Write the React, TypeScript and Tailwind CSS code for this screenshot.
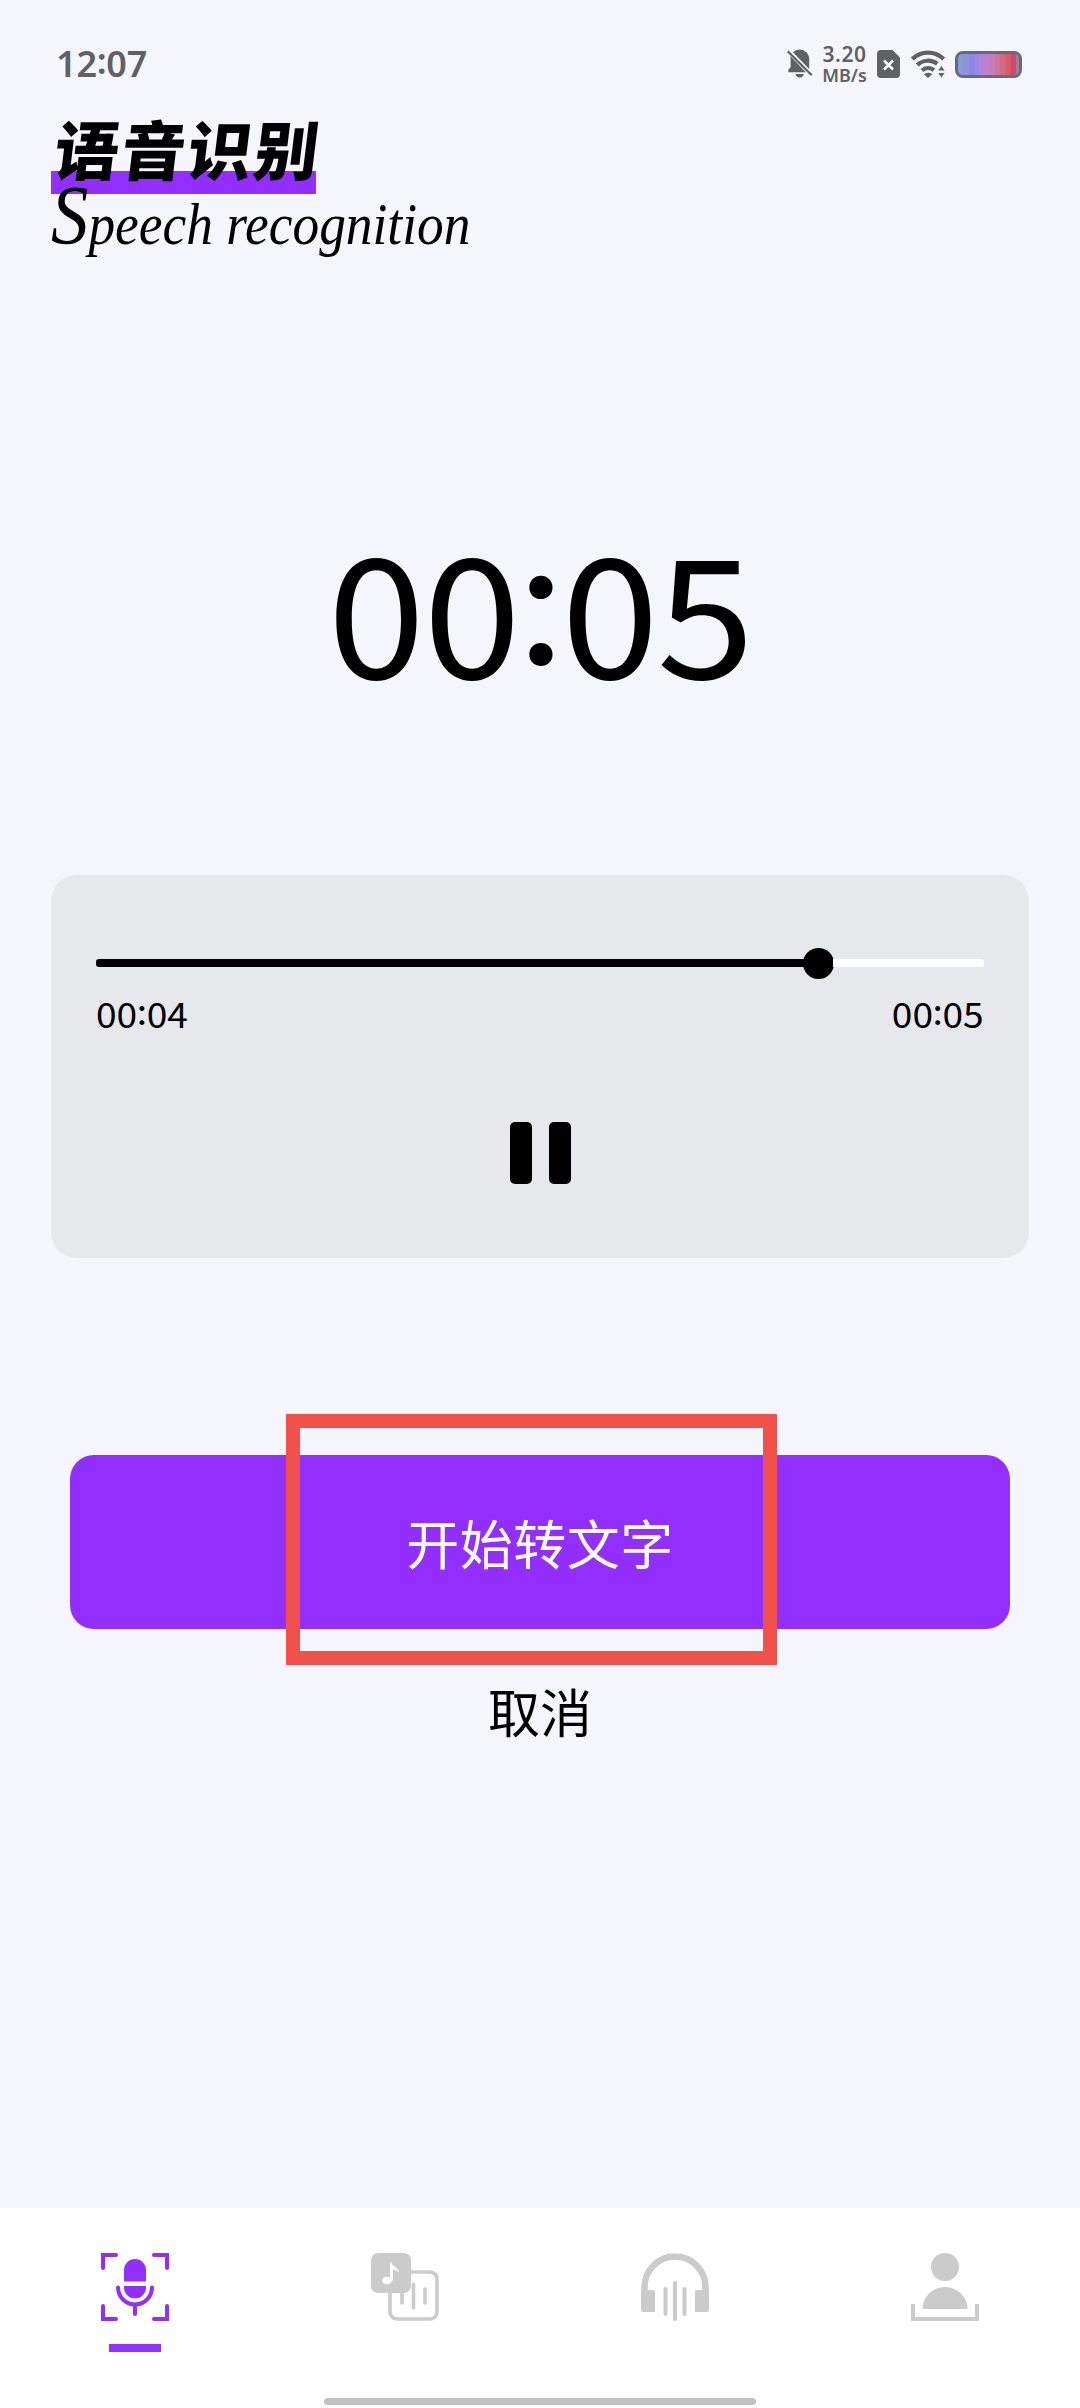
import type { ReactNode } from "react";
import clsx from "clsx";

const BATTERY_STRIPES = [
  "#8a9bd0", "#8a93dd", "#8d87ea", "#9a86e6", "#b084d8", "#bd80cc",
  "#c67cb8", "#cf759c", "#d46a80", "#d65a6c", "#cf4864",
];

/** Time with the colon lifted to the middle of the digits. */
function Clock({ value, className }: { value: string; className?: string }) {
  const [min, sec] = value.split(":");
  return (
    <div className={clsx("whitespace-nowrap", className)}>
      {min}
      <span className="-mx-[0.012em] inline-block -translate-y-[0.09em]">:</span>
      {sec}
    </div>
  );
}

function StatusBar() {
  return (
    <header className="flex h-[120px] items-start justify-between pl-[56px] pr-[58px] text-[#5f6165]">
      <Clock value="12:07" className="mt-[39px] text-[36px] leading-[50px] font-semibold" />
      <div className="mt-[44px] flex h-[40px] items-center">
        {/* Muted bell */}
        <svg className="h-[30px] w-[26px]" viewBox="0 0 26 30" fill="currentColor">
          <path d="M6 3.2C8 1.400 10 .6 12.500.6c5.500 0 9.700 4.300 9.700 9.700v9.700L6 3.200Z" />
          <path d="M3.200 6.700 18.800 23.200H1.300v-2.200l2.300-3V9.500Z" />
          <path d="M8.400 25h8.400c-.6 2.300-2.100 3.600-4.200 3.600S9 27.300 8.400 25Z" />
          <path d="m.7 2.200 24 24" stroke="currentColor" strokeWidth="2.200" fill="none" />
        </svg>
        <div className="ml-[9px] flex w-[45px] flex-col items-center font-semibold">
          <span className="text-[21px] leading-[21px] tracking-[0.6px]">3.20</span>
          <span className="text-[18px] leading-[20px]">MB/s</span>
        </div>
        {/* No SIM */}
        <svg className="ml-[10px] h-[28px] w-[23px]" viewBox="0 0 23 28">
          <path d="M4 0h11.500L23 7.500V24a4 4 0 0 1-4 4H4a4 4 0 0 1-4-4V4a4 4 0 0 1 4-4Z" fill="currentColor" />
          <path d="m7 10.500 9 9m0-9-9 9" stroke="#f4f6fb" strokeWidth="2.600" />
        </svg>
        <svg className="ml-[11px] h-[28px] w-[35px]" viewBox="0 0 35 28" fill="none" stroke="currentColor" strokeWidth="4.200">
          <path d="M1.300 9a22.500 22.500 0 0 1 31.400 0" />
          <path d="M6.300 15a15.500 15.500 0 0 1 20-1.200" />
          <path d="M11 20.500a9 9 0 0 1 12-.4" />
          <path d="M12.800 24.200c2.600-2 5.800-2 8.400 0L17 28Z" fill="currentColor" stroke="none" />
          <path d="m27.200 20.500 3.200-4.500 3.200 4.500Zm0 2.500 3.200 4.500 3.200-4.500Z" fill="currentColor" stroke="none" />
        </svg>
        <div className="ml-[9px] flex h-[27px] w-[67px] overflow-hidden rounded-[8px] border-[3px] border-[#656a82] bg-[#8a9bd0]">
          {BATTERY_STRIPES.map(color => (
            <div key={color} className="flex-1" style={{ backgroundColor: color }} />
          ))}
          <div className="w-[3px] bg-[#9d7f97]" />
        </div>
      </div>
    </header>
  );
}

function Title() {
  return (
    <div className="h-[180px] pl-[51px]">
      <div className="flex h-[74px] w-[265px] items-end bg-[linear-gradient(to_top,#922fff_23px,transparent_23px)]">
        <h1 className="mb-[6px] ml-[4px] -skew-x-[7deg] whitespace-nowrap text-[64px] leading-[74px] font-black tracking-[2.600px] text-black">
          语音识别
        </h1>
      </div>
      <div className="-mt-[18px] origin-left scale-x-[0.89] whitespace-nowrap font-['Liberation_Serif',serif] text-[60px] leading-[80px] italic text-black">
        <span className="text-[84px] leading-[80px]">S</span>peech recognition
      </div>
    </div>
  );
}

function Player() {
  return (
    <section className="mx-[51px] flex h-[383px] flex-col rounded-[26px] bg-[#e6e8ec] px-[45px] pt-[72px]">
      <div className="flex h-[32px] items-center">
        <div className="h-[8px] w-[709px] rounded-l-[3px] bg-black" />
        <div className="-ml-[2px] size-[31px] rounded-full bg-black" />
        <div className="-ml-px h-[8px] flex-1 rounded-r-[3px] bg-white" />
      </div>
      <div className="mt-[9px] flex justify-between font-['Noto_Sans_CJK_SC',sans-serif] text-[35px] leading-[50px] text-black">
        <Clock value="00:04" className="origin-left scale-x-[1.06]" />
        <Clock value="00:05" className="origin-right scale-x-[1.06]" />
      </div>
      <button className="mx-auto mt-[84px] flex gap-[17px]" aria-label="暂停">
        <span className="h-[62px] w-[22px] rounded-[5px] bg-black" />
        <span className="h-[62px] w-[22px] rounded-[5px] bg-black" />
      </button>
    </section>
  );
}

function MicIcon() {
  return (
    <svg className="size-[68px]" viewBox="0 0 68 68" fill="none" stroke="#922fff" strokeWidth="4" strokeLinecap="round">
      <path d="M2 15V2h13M53 2h13v13M66 53v13H53M15 66H2V53" />
      <path d="M23 28.500V17a11 11 0 0 1 22 0v11.500ZM23 33h22v1.500a11 11 0 0 1-22 0Z" fill="#922fff" stroke="none" />
      <path d="M17 34.500a17 17 0 0 0 34 0M34 52v9" />
    </svg>
  );
}

function MusicIcon() {
  return (
    <svg className="size-[68px]" viewBox="0 0 68 68" fill="none" stroke="#cbcbcb" strokeWidth="3.600" strokeLinecap="round">
      <rect x="19" y="19" width="47" height="47" rx="7" />
      <path d="M31 38v12M42.500 31v24M54 36v14" />
      <rect width="40" height="40" rx="7" fill="#cbcbcb" stroke="none" />
      <ellipse cx="16" cy="27.500" rx="4.800" ry="3.800" fill="#fff" stroke="none" />
      <path d="M19.500 27V9c1 4 5 4 8 9.500-2.500-2-4.500-2.500-6.200-2.500v11Z" fill="#fff" stroke="#fff" strokeWidth="1" />
    </svg>
  );
}

function HeadphonesIcon() {
  return (
    <svg className="size-[68px]" viewBox="0 0 68 68" fill="none" stroke="#cbcbcb">
      <path d="M3.500 42v-8a30.500 30.500 0 0 1 61 0v8" strokeWidth="6.500" />
      <path d="M0 37h12a2 2 0 0 1 2 2v20H2a2 2 0 0 1-2-2ZM68 37H56a2 2 0 0 0-2 2v20h12a2 2 0 0 0 2-2Z" fill="#cbcbcb" stroke="none" />
      <path d="M24.500 36v25M34 30v36M43.500 36v25" strokeWidth="4" strokeLinecap="round" />
    </svg>
  );
}

function ProfileIcon() {
  return (
    <svg className="size-[68px]" viewBox="0 0 68 68" fill="#cbcbcb">
      <circle cx="34" cy="14" r="14" />
      <path d="M11.500 56a22.500 22 0 0 1 45 0Z" />
      <path d="M2 51v15h64V51" fill="none" stroke="#cbcbcb" strokeWidth="4" />
    </svg>
  );
}

function Tab({ active = false, children }: { active?: boolean; children: ReactNode }) {
  return (
    <button className="flex flex-1 flex-col items-center gap-[23px] pt-[45px]">
      {children}
      {active && <span className="h-[8px] w-[52px] bg-[#922fff]" />}
    </button>
  );
}

function BottomNav() {
  return (
    <nav className="flex h-[200px] flex-col bg-white">
      <div className="flex h-[190px] items-start">
        <Tab active><MicIcon /></Tab>
        <Tab><MusicIcon /></Tab>
        <Tab><HeadphonesIcon /></Tab>
        <Tab><ProfileIcon /></Tab>
      </div>
      {/* Gesture bar */}
      <div className="mx-auto h-[7px] w-[432px] rounded-full bg-[#c2c2c2]" />
    </nav>
  );
}

export default function App() {
  return (
    <main className="flex h-[2408px] w-[1080px] flex-col overflow-hidden bg-[#f4f6fb] font-['Noto_Sans','Noto_Sans_CJK_SC',sans-serif]">
      <StatusBar />
      <Title />

      <Clock
        value="00:05"
        className="mt-[207px] scale-x-[1.06] text-center font-['Noto_Sans_CJK_SC',sans-serif] text-[166px] leading-[200px] tracking-[-2px] text-black"
      />

      <div className="mt-[168px]">
        <Player />
      </div>

      <div className="relative mx-[70px] mt-[197px]">
        <button className="flex h-[174px] w-full items-center justify-center rounded-[24px] bg-[#922fff] pt-[5px] text-[53px] leading-[76px] tracking-[0.500px] text-white">
          开始转文字
        </button>
        {/* Highlight frame over the button */}
        <div className="pointer-events-none absolute -top-[41px] left-[216px] h-[251px] w-[491px] border-[14px] border-[#f0524b]" />
      </div>
      <button className="mx-auto mt-[46px] text-[52px] leading-[76px] text-black">取消</button>

      <div className="mt-auto">
        <BottomNav />
      </div>
    </main>
  );
}
